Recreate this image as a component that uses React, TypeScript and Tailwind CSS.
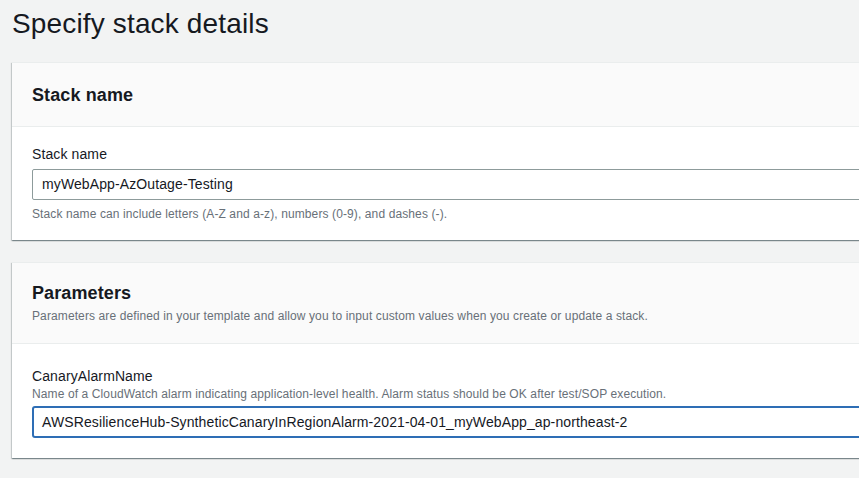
export default function App() {
  return (
    <div className="w-[859px] h-[478px] overflow-hidden bg-[#f2f3f3] font-['Liberation_Sans',Arial,sans-serif] text-[#16191f] tracking-[0.11px]">
      <div className="pl-3">
        <h1 className="pt-[4px] text-[28px] leading-[40px] font-normal tracking-[0.15px]">Specify stack details</h1>
        <div className="mt-[18px] w-[900px] bg-white shadow-[0_1px_1px_0_rgba(0,28,36,0.3),1px_1px_1px_0_rgba(0,28,36,0.15),-1px_1px_1px_0_rgba(0,28,36,0.15)] border-t border-[#eaeded]">
          <div className="h-[64px] bg-[#fafafa] border-b border-[#eaeded] px-5 flex items-center">
            <h2 className="text-[18px] font-bold leading-[22px]">Stack name</h2>
          </div>
          <div className="px-5 pt-[17px] pb-[18px]">
            <div className="text-[14px] leading-[20px]">Stack name</div>
            <div className="mt-[5px] h-[31px] border border-[#8d9b9b] rounded-[2px] flex items-center pl-[9px] text-[14px]">
              myWebApp-AzOutage-Testing
            </div>
            <div className="mt-[6px] text-[12px] leading-[16px] text-[#687078]">
              Stack name can include letters (A-Z and a-z), numbers (0-9), and dashes (-).
            </div>
          </div>
        </div>
        <div className="mt-[22px] w-[900px] bg-white shadow-[0_1px_1px_0_rgba(0,28,36,0.3),1px_1px_1px_0_rgba(0,28,36,0.15),-1px_1px_1px_0_rgba(0,28,36,0.15)] border-t border-[#eaeded]">
          <div className="h-[81px] bg-[#fafafa] border-b border-[#eaeded] px-5 pt-[19px]">
            <h2 className="text-[18px] font-bold leading-[22px]">Parameters</h2>
            <p className="mt-[4px] text-[12px] leading-[16px] text-[#687078]">
              Parameters are defined in your template and allow you to input custom values when you create or update a stack.
            </p>
          </div>
          <div className="px-5 pt-[22px] pb-[20px]">
            <div className="text-[14px] leading-[20px]">CanaryAlarmName</div>
            <div className="text-[12px] leading-[16px] text-[#687078]">
              Name of a CloudWatch alarm indicating application-level health. Alarm status should be OK after test/SOP execution.
            </div>
            <div className="mt-[4px] h-[32px] border-2 border-[#2e6eb5] rounded-[3px] flex items-center pl-[8px] text-[14px]">
              AWSResilienceHub-SyntheticCanaryInRegionAlarm-2021-04-01_myWebApp_ap-northeast-2
            </div>
          </div>
        </div>
      </div>
    </div>
  );
}
